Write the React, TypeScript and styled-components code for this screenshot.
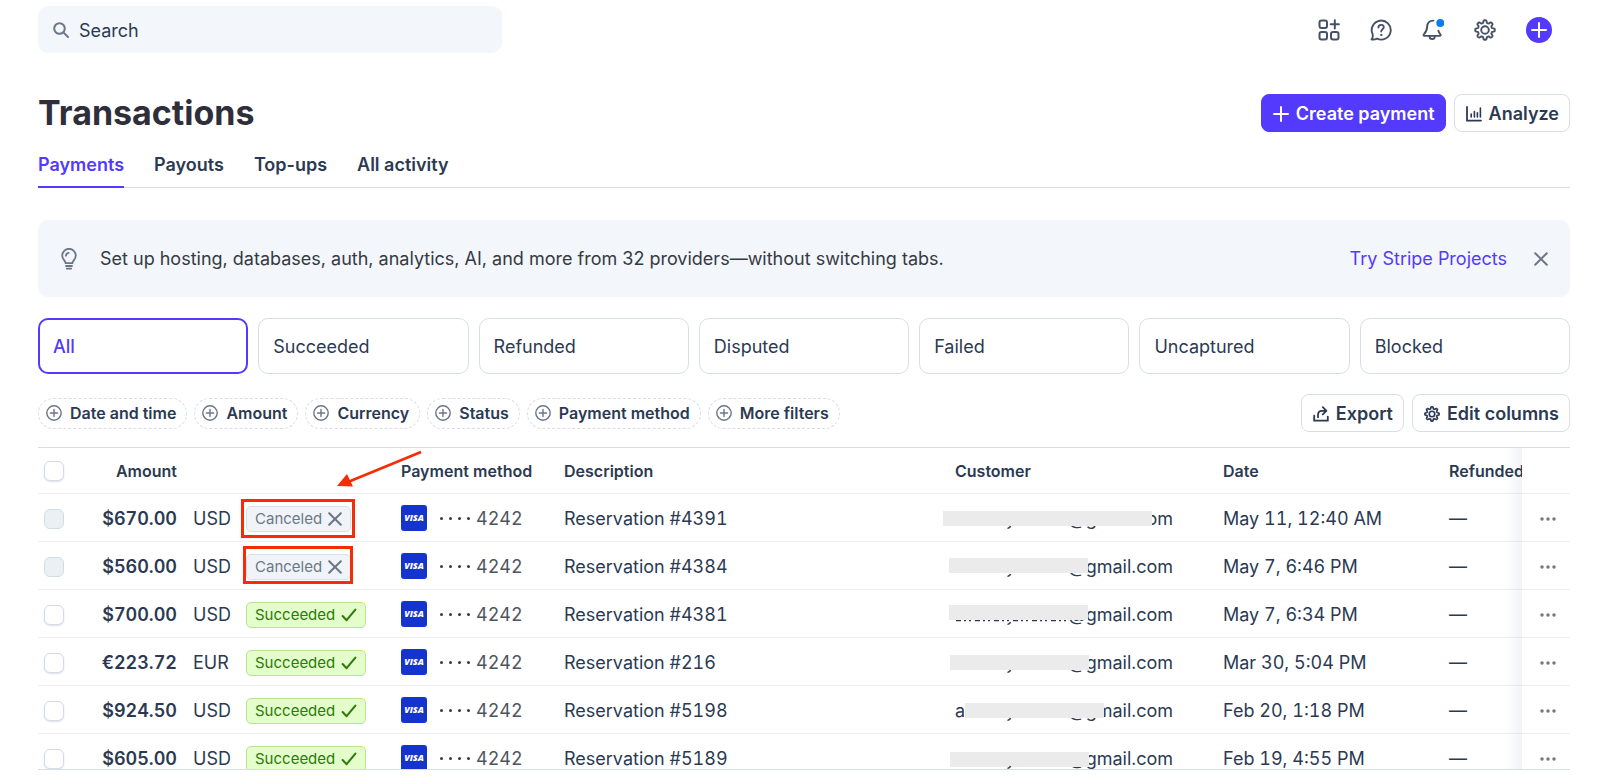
import React from 'react';
import styled, { createGlobalStyle, css } from 'styled-components';

const color = {
  text: '#353a44',
  navy: '#2b3a52',
  muted: '#6c7688',
  accent: '#533afd',
  line: '#d8dee6',
  rowLine: '#ebeef2',
  panel: '#f3f6fa',
  alert: '#f72c06',
};

const GlobalStyle = createGlobalStyle`
  *, *::before, *::after { box-sizing: border-box; }
  body {
    margin: 0;
    background: #fff;
    color: ${color.navy};
    font: 400 18px/24px Inter, "Liberation Sans", sans-serif;
  }
  button, input { font: inherit; color: inherit; }
  button { cursor: pointer; }
  svg { display: block; flex: none; }
`;

/* ---------- icons ---------- */

type IconProps = { size?: number; stroke?: number; children: React.ReactNode; box?: number };

const Icon = ({ size = 22, stroke = 2, box = 22, children }: IconProps) => (
  <svg
    width={size}
    height={size}
    viewBox={`0 0 ${box} ${box}`}
    fill="none"
    stroke="currentColor"
    strokeWidth={stroke}
    strokeLinecap="round"
    strokeLinejoin="round"
    aria-hidden="true"
  >
    {children}
  </svg>
);

const gearPath = (() => {
  const steps = 128;
  const points: string[] = [];
  for (let i = 0; i < steps; i += 1) {
    const angle = (i / steps) * Math.PI * 2;
    const wave = Math.tanh(2.4 * Math.cos(angle * 8));
    const radius = 8.5 + wave * 1.3;
    points.push(`${(11 + radius * Math.sin(angle)).toFixed(2)} ${(11 - radius * Math.cos(angle)).toFixed(2)}`);
  }
  return `M${points.join('L')}Z`;
})();

const SearchIcon = () => (
  <Icon size={16} box={16} stroke={2}>
    <circle cx="6.5" cy="6.5" r="5.3" />
    <path d="M10.6 10.6 15 15" />
  </Icon>
);
const AppsIcon = () => (
  <Icon>
    <rect x="1.5" y="1.5" width="7.5" height="7.5" rx="2" />
    <rect x="1.5" y="13" width="7.5" height="7.5" rx="2" />
    <rect x="13" y="13" width="7.5" height="7.5" rx="2" />
    <path d="M16.8 1.2v8.2M12.7 5.3h8.2" />
  </Icon>
);
const HelpIcon = () => (
  <Icon stroke={1.9}>
    <path d="M2.7 15.3A9.5 9.5 0 1 1 7 19.6C5.6 20.4 3.6 20.7 1.5 20.5 2.5 19.3 3 17.2 2.7 15.3Z" />
    <path d="M8.4 8.5c0-1.6 1.1-2.6 2.7-2.6s2.7.9 2.7 2.4c0 1.9-2.6 2.1-2.6 4.2" />
    <circle cx="11.2" cy="16" r="0.7" fill="currentColor" strokeWidth="1" />
  </Icon>
);
const BellIcon = () => (
  <Icon stroke={1.9}>
    <path d="M11.4 1.6C7.4 1.6 5.4 4 5.2 7.4c-.2 4.2-1.1 5.7-3.3 7.9-.7.7-.4 1.6.6 1.6h15.2c1 0 1.3-.8.7-1.6-1-1.2-1.6-2.2-2-3.6" />
    <path d="M7.6 17.4a2.6 2.6 0 0 0 5.2 0" />
    <circle cx="18.3" cy="4" r="4" fill="#0a7cef" stroke="none" />
  </Icon>
);
const GearIcon = ({ size = 22, stroke = 1.9 }: { size?: number; stroke?: number }) => (
  <Icon size={size} stroke={stroke}>
    <path d={gearPath} />
    <circle cx="11" cy="11" r="3.8" />
  </Icon>
);
const PlusIcon = () => (
  <Icon size={16} box={16}>
    <path d="M8 1v14M1 8h14" />
  </Icon>
);
const ChartIcon = () => (
  <Icon size={16} box={16} stroke={1.8}>
    <path d="M1 1v13.6h14" strokeLinejoin="miter" />
    <path d="M5.2 8v3M8.4 5.5V11M11.4 6.8V11M14.4 2v9" strokeWidth="1.6" />
  </Icon>
);
const BulbIcon = () => (
  <Icon size={22} stroke={1.8}>
    <path d="M7.6 15.2c0-2.4-3.4-3.6-3.4-7.6a6.8 6.8 0 0 1 13.6 0c0 4-3.4 5.2-3.4 7.6Z" />
    <path d="M8 18h6M8.8 20.6h4.4M8 7.8c0-1.6 1-2.8 2.6-3" />
  </Icon>
);
const CloseIcon = ({ size = 14 }: { size?: number }) => (
  <Icon size={size} box={14} stroke={2}>
    <path d="m1.2 1.2 11.6 11.6M12.8 1.2 1.2 12.8" />
  </Icon>
);
const CheckIcon = () => (
  <Icon size={16} box={16} stroke={2}>
    <path d="m1.6 9 4 4.2L14.4 2.6" />
  </Icon>
);
const AddCircleIcon = () => (
  <Icon size={16} box={16} stroke={1.4}>
    <circle cx="8" cy="8" r="7.2" />
    <path d="M8 4.4v7.2M4.4 8h7.2" />
  </Icon>
);
const ExportIcon = () => (
  <Icon size={16} box={16} stroke={1.8}>
    <path d="M1.2 9.6v5h13.6v-4" strokeLinejoin="miter" />
    <path d="M5 11.2V9c0-2.6 1.4-4.2 4-4.2h4M9.8 1.2l3.6 3.6-3.6 3.6" />
  </Icon>
);
const MoreIcon = () => (
  <svg width="16" height="4" viewBox="0 0 16 4" fill={color.muted} aria-hidden="true">
    <circle cx="2" cy="2" r="1.7" />
    <circle cx="8" cy="2" r="1.7" />
    <circle cx="14" cy="2" r="1.7" />
  </svg>
);

/* ---------- layout ---------- */

const Page = styled.div`
  display: flex;
  flex-direction: column;
  height: 100vh;
  padding: 6px 30px 14px 38px;
`;

const TopBar = styled.header`
  display: flex;
  align-items: center;
  justify-content: space-between;
`;

const SearchField = styled.label`
  display: flex;
  align-items: center;
  gap: 10px;
  flex: 0 1 464px;
  height: 47px;
  padding: 0 15px;
  border-radius: 10px;
  background: ${color.panel};
  color: ${color.muted};
`;

const SearchInput = styled.input`
  flex: 1;
  min-width: 0;
  padding: 2px 0 0;
  border: 0;
  outline: 0;
  background: transparent;
  &::placeholder { color: ${color.navy}; opacity: 1; }
`;

const IconBar = styled.nav`
  display: flex;
  align-items: center;
  gap: 30px;
  padding-right: 18px;
  color: #475166;
`;

const IconButton = styled.button`
  display: grid;
  place-items: center;
  padding: 0;
  border: 0;
  background: transparent;
`;

const RoundButton = styled(IconButton)`
  width: 26px;
  height: 26px;
  border-radius: 50%;
  background: ${color.accent};
  color: #fff;
`;

const TitleRow = styled.div`
  display: flex;
  align-items: center;
  justify-content: space-between;
  margin-top: 36px;
`;

const Title = styled.h1`
  margin: 0;
  color: #2f2f3b;
  font-size: 34px;
  font-weight: 700;
  line-height: 48px;
`;

const ButtonGroup = styled.div<{ $gap?: number }>`
  display: flex;
  gap: ${(p) => p.$gap ?? 8}px;
`;

const Button = styled.button<{ $primary?: boolean }>`
  display: flex;
  align-items: center;
  gap: 7px;
  height: 38px;
  padding: 1px 10px 0 11px;
  border: 1px solid ${(p) => (p.$primary ? color.accent : color.line)};
  border-radius: 8px;
  background: ${(p) => (p.$primary ? color.accent : '#fff')};
  color: ${(p) => (p.$primary ? '#fff' : color.navy)};
  font-weight: 600;
  white-space: nowrap;
`;

const Tabs = styled.nav`
  display: flex;
  gap: 30px;
  margin-top: 12px;
  border-bottom: 1px solid ${color.line};
`;

const Tab = styled.a<{ $active?: boolean }>`
  height: 39px;
  margin-bottom: -1px;
  padding-top: 4px;
  border-bottom: 2px solid ${(p) => (p.$active ? color.accent : 'transparent')};
  color: ${(p) => (p.$active ? color.accent : color.navy)};
  font-weight: 600;
  text-decoration: none;
`;

const Banner = styled.aside`
  display: flex;
  align-items: center;
  margin-top: 32px;
  height: 77px;
  padding: 0 22px 0 20px;
  border-radius: 10px;
  background: ${color.panel};
  color: ${color.muted};
`;

const BannerText = styled.p`
  flex: 1;
  margin: 0 0 0 20px;
  color: ${color.text};
`;

const BannerLink = styled.a`
  margin-right: 27px;
  color: ${color.accent};
  text-decoration: none;
`;

const StatusGrid = styled.div`
  display: grid;
  grid-template-columns: repeat(7, 1fr);
  gap: 10px;
  margin-top: 21px;
`;

const StatusCard = styled.button<{ $active?: boolean }>`
  height: 56px;
  padding: 2px 14px 0;
  border: 1px solid ${color.line};
  border-radius: 10px;
  background: #fff;
  text-align: left;
  ${(p) =>
    p.$active &&
    css`
      padding: 2px 13px 0;
      border: 2px solid ${color.accent};
      color: ${color.accent};
      font-weight: 500;
    `}
`;

const FilterRow = styled.div`
  display: flex;
  align-items: center;
  justify-content: space-between;
  margin: 20px 0 15px;
`;

const Pill = styled.button`
  display: flex;
  align-items: center;
  gap: 8px;
  height: 31px;
  padding: 0 10px 0 7px;
  border: 1px dashed ${color.line};
  border-radius: 16px;
  background: #fff;
  font-size: 16px;
  font-weight: 600;
  white-space: nowrap;
  svg { color: ${color.muted}; }
`;

const TableFrame = styled.div`
  flex: 1;
  min-height: 0;
  overflow: hidden;
  border-top: 1px solid ${color.line};
  border-bottom: 1px solid ${color.line};
`;

const Table = styled.table`
  width: 100%;
  table-layout: fixed;
  border-collapse: separate;
  border-spacing: 0;
  font-variant-numeric: tabular-nums;
`;

const Col = styled.col<{ $w?: number }>`
  width: ${(p) => (p.$w ? `${p.$w}px` : 'auto')};
`;

const HeadCell = styled.th<{ $right?: boolean }>`
  height: 46px;
  padding: 0;
  overflow: hidden;
  border-bottom: 1px solid ${color.rowLine};
  font-size: 16px;
  font-weight: 600;
  text-align: ${(p) => (p.$right ? 'right' : 'left')};
  white-space: nowrap;
`;

const Cell = styled.td<{ $pad?: number }>`
  height: 48px;
  padding: 2px 0 0 ${(p) => p.$pad ?? 0}px;
  border-bottom: 1px solid ${color.rowLine};
  white-space: nowrap;
`;

const AmountCell = styled(Cell)`
  font-weight: 600;
  text-align: right;
`;

const edgeShadow = css`
  position: relative;
  overflow: visible;
  &::before {
    content: '';
    position: absolute;
    top: 0;
    bottom: -1px;
    left: -16px;
    width: 16px;
    background: linear-gradient(to right, rgba(60, 80, 110, 0), rgba(60, 80, 110, 0.07));
  }
`;

const ActionHead = styled(HeadCell)`${edgeShadow}`;
const ActionCell = styled(Cell)`${edgeShadow}`;

const Checkbox = styled.input`
  display: block;
  appearance: none;
  width: 20px;
  height: 20px;
  margin: 0 0 0 6px;
  border: 1px solid #d3dbe5;
  border-radius: 6px;
  background: #fff;
  box-shadow: 0 1px 2px rgba(40, 60, 90, 0.14);
  &:disabled {
    background: #ebf0f5;
    box-shadow: none;
  }
`;

const BadgeSlot = styled.div`
  position: relative;
  display: flex;
  width: max-content;
`;

const Badge = styled.span<{ $ok: boolean }>`
  display: flex;
  align-items: center;
  gap: 6px;
  height: 26px;
  padding: 0 8px;
  border: 1px solid ${(p) => (p.$ok ? '#b5e78b' : '#d8e1ea')};
  border-radius: 5px;
  background: ${(p) => (p.$ok ? '#e3fdcb' : '#f0f4f9')};
  color: ${(p) => (p.$ok ? '#2c7a08' : color.muted)};
  font-size: 15px;
`;

const Highlight = styled.span<{ $wide: boolean }>`
  position: absolute;
  inset: ${(p) => (p.$wide ? '-7px -4px -6px -5px' : '-8px -2px -4px -3px')};
  border: 3px solid ${color.alert};
`;

const Arrow = styled.svg`
  position: absolute;
  left: 90px;
  top: -56px;
  overflow: visible;
`;

const Card = styled.div`
  display: flex;
  align-items: center;
  color: #50545f;
`;

const Visa = styled.span`
  display: grid;
  place-items: center;
  width: 26px;
  height: 26px;
  margin: 0 13px 2px 0;
  border-radius: 3px;
  background: #1434cb;
  color: #fff;
  font: italic 800 9px/26px "Open Sans", sans-serif;
`;

const Dots = styled.span`
  display: flex;
  gap: 6px;
  margin-right: 6px;
  i {
    width: 3px;
    height: 3px;
    border-radius: 50%;
    background: ${color.text};
  }
`;

const Email = styled.div`
  position: relative;
  display: flex;
  width: 218px;
  justify-content: space-between;
`;

const Redaction = styled.span<{ $x: number; $w: number; $y: number }>`
  position: absolute;
  left: ${(p) => p.$x}px;
  top: ${(p) => p.$y}px;
  width: ${(p) => p.$w}px;
  height: 15px;
  background: #ebebeb;
`;

const Residue = styled.svg`
  position: absolute;
  left: 0;
  top: 0;
`;

const MoreButton = styled(IconButton)`
  width: 16px;
  height: 24px;
  margin-left: 18px;
`;

/* ---------- data ---------- */

type Payment = {
  amount: string;
  currency: string;
  ok: boolean;
  description: string;
  date: string;
  bar: [number, number, number];
  initial?: string;
  residue?: boolean;
};

const payments: Payment[] = [
  { amount: '$670.00', currency: 'USD', ok: false, description: 'Reservation #4391', date: 'May 11, 12:40 AM', bar: [-12, 209, 4] },
  { amount: '$560.00', currency: 'USD', ok: false, description: 'Reservation #4384', date: 'May 7, 6:46 PM', bar: [-6, 139, 3] },
  { amount: '$700.00', currency: 'USD', ok: true, description: 'Reservation #4381', date: 'May 7, 6:34 PM', bar: [-6, 139, 2], residue: true },
  { amount: '€223.72', currency: 'EUR', ok: true, description: 'Reservation #216', date: 'Mar 30, 5:04 PM', bar: [-5, 139, 4] },
  { amount: '$924.50', currency: 'USD', ok: true, description: 'Reservation #5198', date: 'Feb 20, 1:18 PM', bar: [10, 139, 4], initial: 'a' },
  { amount: '$605.00', currency: 'USD', ok: true, description: 'Reservation #5189', date: 'Feb 19, 4:55 PM', bar: [-5, 139, 5] },
];

const tabs = ['Payments', 'Payouts', 'Top-ups', 'All activity'];
const statuses = ['All', 'Succeeded', 'Refunded', 'Disputed', 'Failed', 'Uncaptured', 'Blocked'];
const filters = ['Date and time', 'Amount', 'Currency', 'Status', 'Payment method', 'More filters'];

const PaymentRow = ({ payment, first }: { payment: Payment; first: boolean }) => (
  <tr>
    <Cell>
      <Checkbox type="checkbox" disabled={!payment.ok} aria-label={`Select ${payment.description}`} />
    </Cell>
    <AmountCell>{payment.amount}</AmountCell>
    <Cell $pad={16}>{payment.currency}</Cell>
    <Cell>
      <BadgeSlot>
        <Badge $ok={payment.ok}>
          {payment.ok ? 'Succeeded' : 'Canceled'}
          {payment.ok ? <CheckIcon /> : <CloseIcon />}
        </Badge>
        {!payment.ok && <Highlight $wide={first} />}
        {first && (
          <Arrow width="86" height="38" viewBox="0 0 86 38" aria-hidden="true">
            <path d="M85 2 12 32" stroke={color.alert} strokeWidth="2.6" />
            <path d="M1 36 11 24l6 12.6Z" fill={color.alert} />
          </Arrow>
        )}
      </BadgeSlot>
    </Cell>
    <Cell>
      <Card>
        <Visa>VISA</Visa>
        <Dots><i /><i /><i /><i /></Dots>
        4242
      </Card>
    </Cell>
    <Cell>{payment.description}</Cell>
    <Cell>
      <Email>
        <span>{payment.initial}</span>
        <span>@gmail.com</span>
        <Redaction $x={payment.bar[0]} $w={payment.bar[1]} $y={payment.bar[2]} />
        <Residue width="134" height="24" viewBox="0 0 134 24" aria-hidden="true" fill="none" stroke={color.navy}>
          <path d="M55.5 19c-.6 1.8-1.6 2.4-3 2.2" strokeWidth="1.5" />
          {payment.residue && <path d="M1 17.7h112" strokeWidth="1.2" strokeDasharray="5 3 2 3 2 4" />}
        </Residue>
      </Email>
    </Cell>
    <Cell>{payment.date}</Cell>
    <Cell>—</Cell>
    <ActionCell>
      <MoreButton type="button" aria-label="More actions"><MoreIcon /></MoreButton>
    </ActionCell>
  </tr>
);

export default function App() {
  return (
    <Page>
      <GlobalStyle />
      <TopBar>
        <SearchField>
          <SearchIcon />
          <SearchInput type="text" placeholder="Search" aria-label="Search" />
        </SearchField>
        <IconBar>
          <IconButton type="button" aria-label="Apps"><AppsIcon /></IconButton>
          <IconButton type="button" aria-label="Help"><HelpIcon /></IconButton>
          <IconButton type="button" aria-label="Notifications"><BellIcon /></IconButton>
          <IconButton type="button" aria-label="Settings"><GearIcon /></IconButton>
          <RoundButton type="button" aria-label="Create"><PlusIcon /></RoundButton>
        </IconBar>
      </TopBar>

      <TitleRow>
        <Title>Transactions</Title>
        <ButtonGroup>
          <Button type="button" $primary><PlusIcon />Create payment</Button>
          <Button type="button"><ChartIcon />Analyze</Button>
        </ButtonGroup>
      </TitleRow>

      <Tabs>
        {tabs.map((tab, i) => (
          <Tab key={tab} href="#" $active={i === 0}>{tab}</Tab>
        ))}
      </Tabs>

      <Banner>
        <BulbIcon />
        <BannerText>
          Set up hosting, databases, auth, analytics, AI, and more from 32 providers—without switching tabs.
        </BannerText>
        <BannerLink href="#">Try Stripe Projects</BannerLink>
        <IconButton type="button" aria-label="Dismiss"><CloseIcon /></IconButton>
      </Banner>

      <StatusGrid>
        {statuses.map((status, i) => (
          <StatusCard key={status} type="button" $active={i === 0}>{status}</StatusCard>
        ))}
      </StatusGrid>

      <FilterRow>
        <ButtonGroup $gap={7}>
          {filters.map((filter) => (
            <Pill key={filter} type="button"><AddCircleIcon />{filter}</Pill>
          ))}
        </ButtonGroup>
        <ButtonGroup>
          <Button type="button"><ExportIcon />Export</Button>
          <Button type="button"><GearIcon size={16} stroke={2.3} />Edit columns</Button>
        </ButtonGroup>
      </FilterRow>

      <TableFrame>
        <Table>
          <colgroup>
            <Col $w={44} /><Col $w={95} /><Col $w={69} /><Col $w={155} /><Col $w={163} />
            <Col /><Col $w={268} /><Col $w={226} /><Col $w={73} /><Col $w={48} />
          </colgroup>
          <thead>
            <tr>
              <HeadCell><Checkbox type="checkbox" aria-label="Select all" /></HeadCell>
              <HeadCell $right>Amount</HeadCell>
              <HeadCell />
              <HeadCell />
              <HeadCell>Payment method</HeadCell>
              <HeadCell>Description</HeadCell>
              <HeadCell>Customer</HeadCell>
              <HeadCell>Date</HeadCell>
              <HeadCell>Refunded</HeadCell>
              <ActionHead />
            </tr>
          </thead>
          <tbody>
            {payments.map((payment, i) => (
              <PaymentRow key={payment.description} payment={payment} first={i === 0} />
            ))}
          </tbody>
        </Table>
      </TableFrame>
    </Page>
  );
}
